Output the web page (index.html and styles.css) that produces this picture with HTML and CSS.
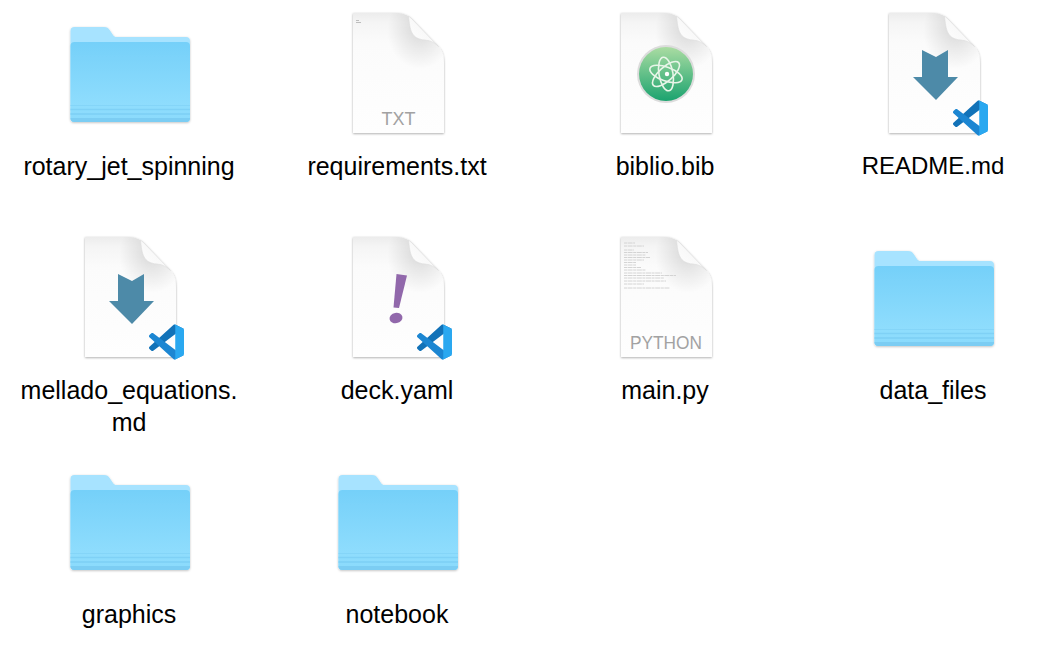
FILE: index.html
```html
<!DOCTYPE html>
<html lang="en">
<head>
  <meta charset="UTF-8" />
  <meta name="viewport" content="width=device-width, initial-scale=1.0" />
  <title>Files</title>
  <link rel="stylesheet" href="styles.css">
</head>
<body>
  <!-- shared icon parts -->
  <svg class="sprites" aria-hidden="true">
    <defs>
      <linearGradient id="folderFront" x1="0" y1="0" x2="0" y2="1">
        <stop offset="0" stop-color="#75d0f9" />
        <stop offset="0.8" stop-color="#8fddfd" />
        <stop offset="1" stop-color="#8adafc" />
      </linearGradient>
      <linearGradient id="pageFill" x1="0" y1="0" x2="0" y2="1">
        <stop offset="0" stop-color="#ececec" />
        <stop offset="0.08" stop-color="#f5f5f5" />
        <stop offset="0.25" stop-color="#fbfbfb" />
        <stop offset="1" stop-color="#fefefe" />
      </linearGradient>
      <linearGradient id="foldFill" x1="0" y1="1" x2="1" y2="0">
        <stop offset="0" stop-color="#fff" />
        <stop offset="1" stop-color="#f2f2f2" />
      </linearGradient>
      <radialGradient id="foldShade" cx="0.6" cy="0.25" r="0.55">
        <stop offset="0" stop-color="#000" stop-opacity="0.13" />
        <stop offset="1" stop-color="#000" stop-opacity="0" />
      </radialGradient>
      <linearGradient id="atomFill" x1="0" y1="0" x2="0" y2="1">
        <stop offset="0" stop-color="#aadca2" />
        <stop offset="1" stop-color="#1ba36f" />
      </linearGradient>
      <filter id="pageShadow" x="-10%" y="-10%" width="120%" height="120%">
        <feDropShadow dx="0" dy="0.8" stdDeviation="0.8" flood-color="#000" flood-opacity="0.34" />
      </filter>
      <filter id="folderShadow" x="-10%" y="-10%" width="120%" height="120%">
        <feDropShadow dx="0" dy="0.8" stdDeviation="0.8" flood-color="#000" flood-opacity="0.25" />
      </filter>

      <symbol id="folder" viewBox="0 0 128 128">
        <g filter="url(#folderShadow)">
          <path d="M4.500 23a4 4 0 0 1 4-4H38c3 0 4.500 1 6 3.500l3 4.500c1 1.500 2 2 4 2H120a4 4 0 0 1 4 4V110a4 4 0 0 1-4 4H8.500a4 4 0 0 1-4-4Z" fill="#a7e3ff" />
          <path d="M4.500 38a4 4 0 0 1 4-4H120a4 4 0 0 1 4 4V110a4 4 0 0 1-4 4H8.500a4 4 0 0 1-4-4Z" fill="url(#folderFront)" />
        </g>
        <path d="M4.500 97.500H124" stroke="#84d5f8" stroke-width="1" />
        <path d="M4.500 101.500H124" stroke="#7fd1f6" stroke-width="1.500" />
        <path d="M4.500 106H124" stroke="#7ccff5" stroke-width="1.500" />
        <path d="M4.500 110a4 4 0 0 0 4 4H120a4 4 0 0 0 4-4Z" fill="#7ccdf3" />
      </symbol>

      <symbol id="page" viewBox="0 0 128 128">
        <path d="M19 5H60C68 5 73 6 78 11L104 38C109 43 110 48 110 56V125H19Z" fill="url(#pageFill)" filter="url(#pageShadow)" />
        <path d="M50 5H60C68 5 73 6 78 11L104 38C109 43 110 48 110 56V75H50Z" fill="url(#foldShade)" />
        <path d="M74.500 8C76 22 77 31 91 32C97 32.500 101 35 104.500 38.500L78 11Z" fill="url(#foldFill)" stroke="#dcdcdc" stroke-width="0.600" />
      </symbol>

      <symbol id="vscode" viewBox="0 0 100 100">
        <path d="M96.460 10.800L75.860.880C73.470-.270 70.620.210 68.750 2.080L1.300 63.580C-.520 65.240-.510 68.090 1.300 69.750L6.810 74.750C8.300 76.100 10.530 76.200 12.130 74.990L93.360 13.370C96.090 11.300 100 13.250 100 16.670V16.430C100 14.030 98.620 11.840 96.460 10.800Z" fill="#1272b8" />
        <path d="M96.460 89.200L75.860 99.120C73.470 100.270 70.620 99.790 68.750 97.920L1.300 36.420C-.520 34.760-.510 31.910 1.300 30.250L6.810 25.250C8.300 23.900 10.530 23.800 12.130 25.010L93.360 86.630C96.090 88.700 100 86.750 100 83.330V83.570C100 85.970 98.620 88.160 96.460 89.200Z" fill="#1c86d2" />
        <path d="M75.860 99.130C73.470 100.270 70.620 99.790 68.750 97.920C71.060 100.220 75 98.590 75 95.330V4.670C75 1.410 71.060-.220 68.750 2.080C70.620.210 73.470-.270 75.860.870L96.460 10.780C98.620 11.820 100 14.010 100 16.410V83.590C100 85.990 98.620 88.180 96.460 89.220Z" fill="#2aa8f0" />
      </symbol>

      <symbol id="mdDoc" viewBox="0 0 128 128">
        <use href="#page" width="128" height="128" />
        <path d="M52 42L66 49L78 42V69H88L66 92L43 69H52Z" fill="#4d8aa8" />
        <use href="#vscode" x="83" y="92" width="35" height="36" />
      </symbol>
    </defs>
  </svg>

  <div class="files">
    <div class="file">
      <svg class="icon"><use href="#folder" /></svg>
      <div class="name">rotary_jet_spinning</div>
    </div>
    <div class="file">
      <svg class="icon" viewBox="0 0 128 128">
        <use href="#page" width="128" height="128" />
        <path class="tiny" d="M22 12.500h3M22 14.500h5" />
        <text class="badge" x="64.500" y="117" text-anchor="middle">TXT</text>
      </svg>
      <div class="name">requirements.txt</div>
    </div>
    <div class="file">
      <svg class="icon" viewBox="0 0 128 128">
        <use href="#page" width="128" height="128" />
        <circle cx="64" cy="66" r="29" fill="#dcdcdc" />
        <circle cx="64" cy="66" r="27" fill="url(#atomFill)" />
        <g class="atom">
          <ellipse cx="64" cy="66" rx="17" ry="7" transform="rotate(20 64 66)" />
          <ellipse cx="64" cy="66" rx="17" ry="7" transform="rotate(-42 64 66)" />
          <ellipse cx="64" cy="66" rx="17" ry="7" transform="rotate(80 64 66)" />
        </g>
        <circle cx="65" cy="66" r="2.200" fill="#fff" />
      </svg>
      <div class="name">biblio.bib</div>
    </div>
    <div class="file">
      <svg class="icon"><use href="#mdDoc" /></svg>
      <div class="name name-caps">README.md</div>
    </div>

    <div class="file">
      <svg class="icon"><use href="#mdDoc" /></svg>
      <div class="name">mellado_equations.<wbr>md</div>
    </div>
    <div class="file">
      <svg class="icon" viewBox="0 0 128 128">
        <use href="#page" width="128" height="128" />
        <path d="M62.500 42L73 43.500L65 76L59.500 75.500Z" fill="#9168ab" />
        <ellipse cx="62" cy="86" rx="6.500" ry="5.200" fill="#9168ab" transform="rotate(-10 62 86)" />
        <use href="#vscode" x="83" y="92" width="35" height="36" />
      </svg>
      <div class="name">deck.yaml</div>
    </div>
    <div class="file">
      <svg class="icon" viewBox="0 0 128 128">
        <use href="#page" width="128" height="128" />
        <path class="code" d="M22 11h11M22 14h20M22 18h10M22 20.500h24M22 23h22M22 25.500h26M22 28h20M22 30.500h12M22 33h12M22 35.500h17M22 38h22M22 41h38M22 43.500h52M22 46h40M22 49h42M22 52h20M22 56h46" />
        <text class="badge badge-long" x="64" y="117" text-anchor="middle" textLength="72" lengthAdjust="spacingAndGlyphs">PYTHON</text>
      </svg>
      <div class="name">main.py</div>
    </div>
    <div class="file">
      <svg class="icon"><use href="#folder" /></svg>
      <div class="name">data_files</div>
    </div>

    <div class="file">
      <svg class="icon"><use href="#folder" /></svg>
      <div class="name">graphics</div>
    </div>
    <div class="file">
      <svg class="icon"><use href="#folder" /></svg>
      <div class="name">notebook</div>
    </div>
  </div>
</body>
</html>
```

FILE: styles.css
```css
body {
  margin: 0;
  background: #fff;
  color: #000;
  font-family: "Liberation Sans", Arial, sans-serif;
}
.sprites {
  position: absolute;
  width: 0;
  height: 0;
}
.files {
  display: grid;
  grid-template-columns: repeat(4, 240px);
  grid-template-rows: 224px 224px auto;
  column-gap: 28px;
  padding: 8px 0 0 10px;
}
.file {
  display: flex;
  flex-direction: column;
  align-items: center;
}
.icon {
  display: block;
  width: 128px;
  height: 128px;
  overflow: visible;
}
.name {
  box-sizing: border-box;
  width: 240px;
  margin-top: 14px;
  padding-right: 2px;
  font-size: 25px;
  line-height: 32px;
  text-align: center;
}
.name-caps {
  font-size: 24px;
}
.badge {
  fill: #a2a2a2;
  font-family: "Liberation Sans", Arial, sans-serif;
  font-size: 18px;
}
.badge-long {
  font-size: 19px;
}
.tiny {
  fill: none;
  stroke: #bdbdbd;
  stroke-width: 1;
}
.code {
  fill: none;
  stroke: #cfcfcf;
  stroke-width: 0.900;
  stroke-dasharray: 3 0.600 5 0.600;
}
.atom {
  fill: none;
  stroke: #e8f5e8;
  stroke-width: 1.600;
}
```
